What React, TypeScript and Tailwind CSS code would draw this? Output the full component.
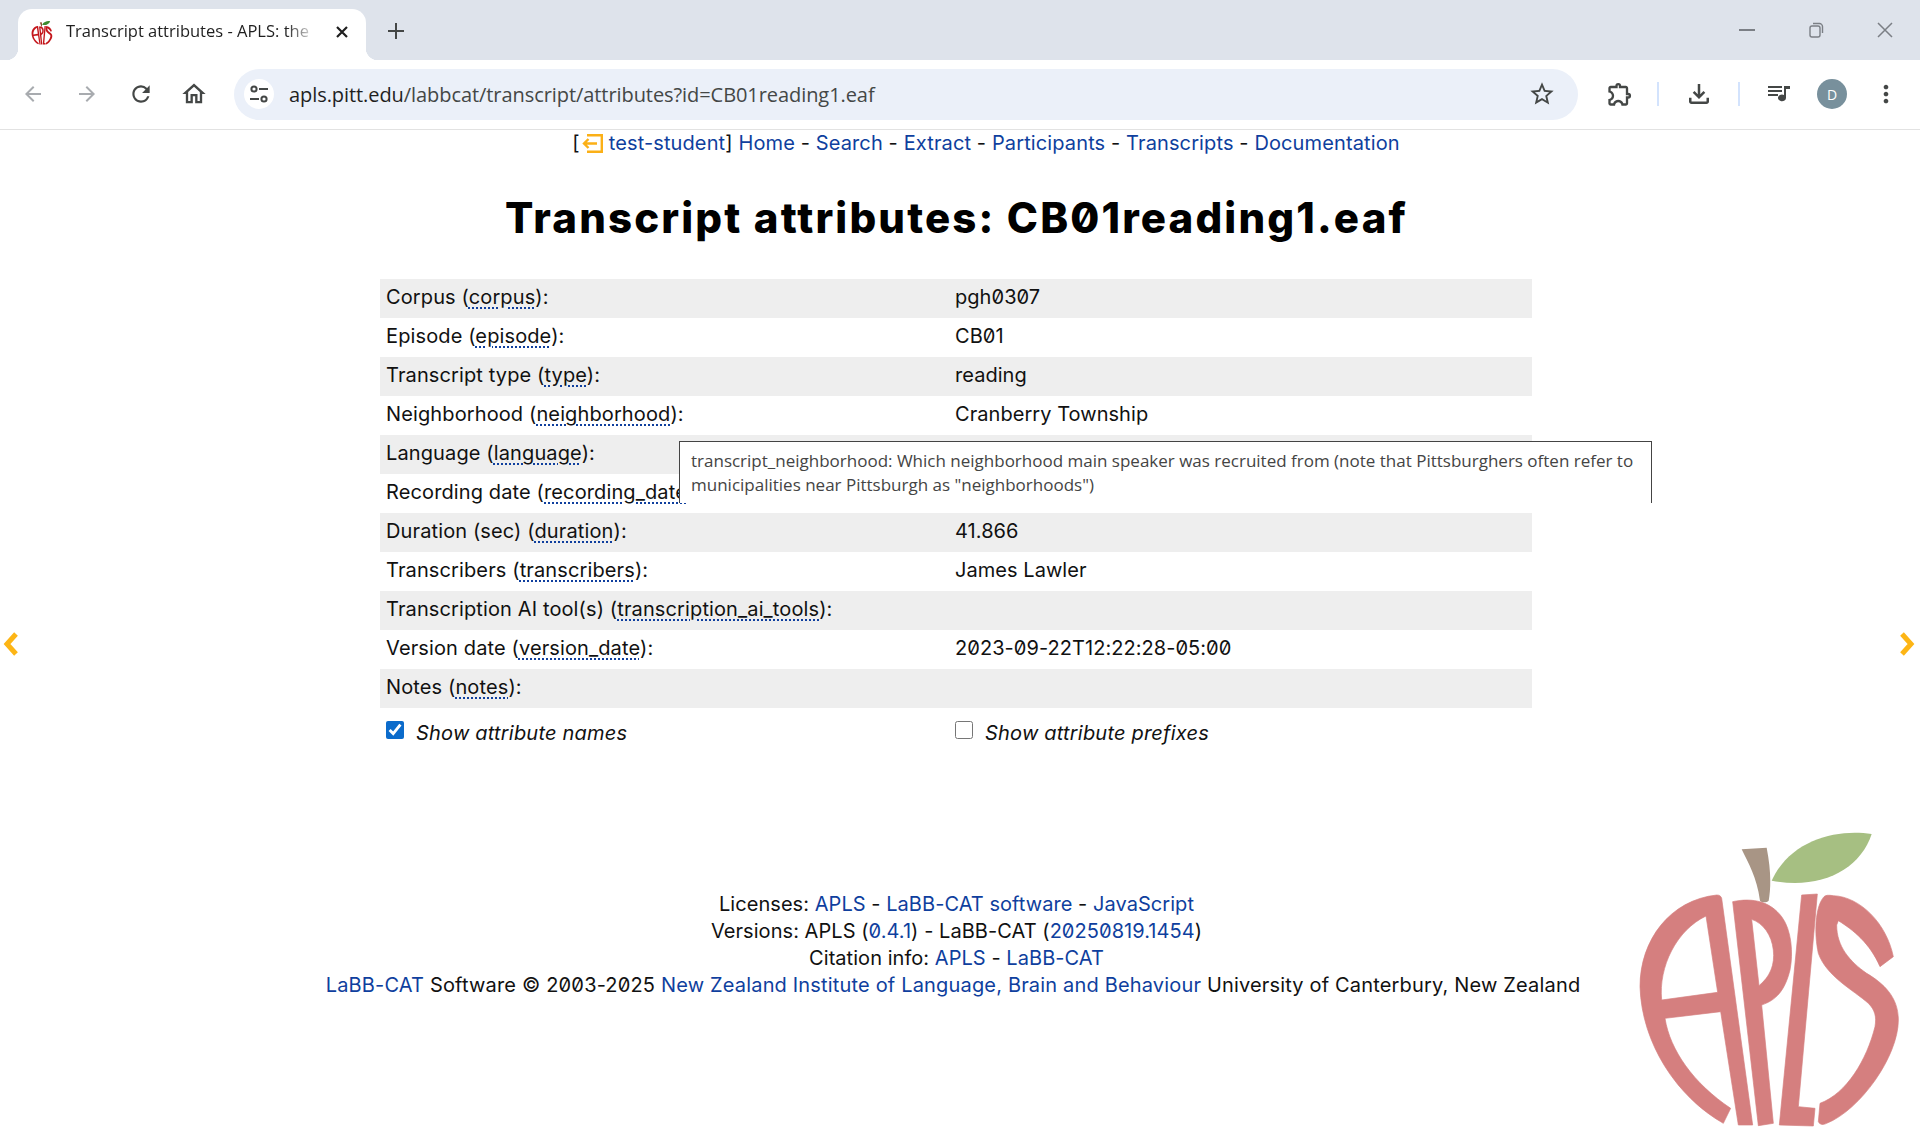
import { MdArrowBack, MdArrowForward, MdOutlineExtension, MdOutlineFileDownload, MdOutlineHome, MdMoreVert, MdRefresh, MdStarBorder } from "react-icons/md";

const rows = [
  ["Corpus", "corpus", "pgh0307"],
  ["Episode", "episode", "CB01"],
  ["Transcript type", "type", "reading"],
  ["Neighborhood", "neighborhood", "Cranberry Township"],
  ["Language", "language", ""],
  ["Recording date", "recording_date", ""],
  ["Duration (sec)", "duration", "41.866"],
  ["Transcribers", "transcribers", "James Lawler"],
  ["Transcription AI tool(s)", "transcription_ai_tools", ""],
  ["Version date", "version_date", "2023-09-22T12:22:28-05:00"],
  ["Notes", "notes", ""],
];

const inter = "font-['Inter','Liberation_Sans',sans-serif] [font-feature-settings:'zero']";

function Apple({ className, fruit, stem, leaf }: { className: string; fruit: string; stem: string; leaf: string }) {
  return (
    <svg viewBox="0 0 900 954" className={className}>
      <path fill={leaf} d="M755 72C650 55 510 90 455 212C600 240 720 180 755 72Z" />
      <path fill={stem} d="M365 118L440 113C455 190 452 240 446 272C440 278 425 278 420 272C410 200 385 160 365 118Z" />
      <g fill={fruit} fillRule="evenodd" stroke={fruit} strokeWidth="2" strokeLinejoin="round">
        <path d="M290 255C150 270 60 390 60 530C65 700 170 860 310 940L332 895C220 820 150 720 135 625L302 605L355 945L398 945L305 265C303 258 298 255 290 255ZM258 318L293 547L125 570C115 470 170 360 258 318Z" />
        <path d="M338 275C400 262 450 275 485 320C515 360 520 430 510 480C495 540 470 570 425 585L460 940L415 947ZM395 328L417 527C450 500 465 465 460 420C455 375 430 340 395 328Z" />
        <path d="M545 255L592 252L535 890L585 895L580 948L478 945Z" />
        <path d="M612 260C585 290 582 370 595 430C620 500 700 540 745 580C765 600 770 620 765 650C740 750 680 850 600 880L595 935C600 945 610 945 620 940C720 900 835 740 835 630C835 560 790 520 740 490C690 455 650 410 650 345L655 332C700 360 750 400 780 470L820 440C800 340 720 260 640 257C625 255 618 255 612 260Z" />
      </g>
    </svg>
  );
}

function ChromeBar() {
  return (
    <div className="font-['Open_Sans','Liberation_Sans',sans-serif]">
      <div className="flex h-[60px] items-end bg-[#dee3eb] pl-[18px]">
        <div className="relative flex h-[51px] w-[348px] items-center rounded-t-[14px] bg-white pb-[6px]">
          <span className="absolute bottom-0 left-[-12px] h-3 w-3 bg-[radial-gradient(circle_at_0_0,#dee3eb_12px,#ffffff_12.5px)]" />
          <span className="absolute bottom-0 right-[-12px] h-3 w-3 bg-[radial-gradient(circle_at_100%_0,#dee3eb_12px,#ffffff_12.5px)]" />
          <Apple className="ml-[12px] h-[26px] w-[24px]" fruit="#c4161c" stem="#8a4a2a" leaf="#3d8b2f" />
          <span className="ml-[12px] w-[250px] overflow-hidden whitespace-nowrap text-[16.5px] text-[#1f1f1f] [mask-image:linear-gradient(90deg,#000_88%,transparent)]">
            Transcript attributes - APLS: the
          </span>
          <svg viewBox="0 0 14 14" className="ml-[19px] h-[14px] w-[14px]" stroke="#1f1f1f" strokeWidth="2.2" fill="none">
            <path d="M2 2L12 12M12 2L2 12" />
          </svg>
        </div>
        <svg viewBox="0 0 16 16" className="mb-[21px] ml-[22px] h-4 w-4" stroke="#444746" strokeWidth="2" fill="none">
          <path d="M8 0V16M0 8H16" />
        </svg>
        <div className="flex-1" />
        <div className="mb-[22px] flex items-center gap-[53px] pr-[27px]">
          <span className="h-[2px] w-4 bg-[#7b7f85]" />
          <svg viewBox="0 0 16 16" className="h-4 w-4" fill="none" stroke="#7b7f85" strokeWidth="1.4">
            <rect x="2" y="4" width="10" height="11" rx="2" />
            <path d="M5 1.5H11.5C13 1.5 14.5 3 14.5 4.5V11" />
          </svg>
          <svg viewBox="0 0 16 16" className="h-4 w-4" fill="none" stroke="#7b7f85" strokeWidth="1.5">
            <path d="M1 1L15 15M15 1L1 15" />
          </svg>
        </div>
      </div>
      <div className="flex h-[70px] items-center border-b border-[#e2e2e2] bg-white pb-[1px] pl-[21px]">
        <MdArrowBack className="h-[24px] w-[24px] shrink-0 text-[#a8abaf]" />
        <MdArrowForward className="ml-[30px] h-[24px] w-[24px] shrink-0 text-[#a8abaf]" />
        <MdRefresh className="ml-[29px] h-[26px] w-[26px] shrink-0 text-[#444746]" />
        <MdOutlineHome className="ml-[26px] h-[28px] w-[28px] shrink-0 text-[#444746]" />
        <div className="ml-[26px] flex h-[51px] w-[1344px] shrink-0 items-center rounded-full bg-[#ebf0f9] pl-[10px] pr-[22px]">
          <span className="flex h-[30px] w-[30px] items-center justify-center rounded-full bg-white">
            <svg viewBox="0 0 20 20" className="h-[20px] w-[20px]" fill="none" stroke="#444746" strokeWidth="2">
              <circle cx="5" cy="5" r="2.6" />
              <path d="M10 5H19M1 15H10" />
              <circle cx="15" cy="15" r="2.6" />
            </svg>
          </span>
          <span className="ml-[15px] flex-1 translate-y-[1px] whitespace-nowrap text-[20px] tracking-[-0.07px] text-[#444746]">
            <span className="text-[#1f1f1f]">apls.pitt.edu</span>/labbcat/transcript/attributes?id=CB01reading1.eaf
          </span>
          <MdStarBorder className="h-[28px] w-[28px] text-[#444746]" />
        </div>
        <MdOutlineExtension className="ml-[28px] h-[28px] w-[28px] shrink-0 text-[#444746]" />
        <span className="ml-[23px] h-[24px] w-[2px] shrink-0 bg-[#d3e3fd]" />
        <MdOutlineFileDownload className="ml-[25px] h-[30px] w-[30px] shrink-0 text-[#444746]" />
        <span className="ml-[24px] h-[24px] w-[2px] shrink-0 bg-[#d3e3fd]" />
        <svg viewBox="0 0 24 24" className="ml-[27px] h-[24px] w-[24px] shrink-0" fill="#444746">
          <path d="M1 4H15V6H1ZM1 8H15V10H1ZM1 12H11V14H1ZM17 4H23V7H19V16A4 3.4 0 1 1 17 13Z" />
        </svg>
        <span className="ml-[26px] flex h-[30px] w-[30px] shrink-0 items-center justify-center rounded-full bg-[#78909c] text-[14px] text-white">
          D
        </span>
        <MdMoreVert className="ml-[25px] h-[28px] w-[28px] shrink-0 text-[#444746]" />
      </div>
    </div>
  );
}

function Sep() {
  return <span> - </span>;
}

function A({ children }: { children: React.ReactNode }) {
  return <a className="text-[#0f3f9e]">{children}</a>;
}

export default function App() {
  return (
    <div className="relative h-[1128px] w-[1920px] overflow-hidden bg-white">
      <ChromeBar />

      <main className={`relative text-[20px] leading-[27px] text-[#111] ${inter}`}>
        <nav className="flex items-center justify-center pl-[52px] tracking-[0.12px]">
          <span className="whitespace-pre">[</span>
          <svg viewBox="0 0 22 19" className="ml-[1px] h-[19px] w-[22px]" fill="none" stroke="#fbb017" strokeWidth="2.4">
            <path d="M6 1.2H20.8V17.8H6" />
            <path d="M16 9.5H3M7.5 5L3 9.5L7.5 14" />
          </svg>
          <span className="ml-[6px] whitespace-pre">
            <A>test-student</A>] <A>Home</A>
            <Sep />
            <A>Search</A>
            <Sep />
            <A>Extract</A>
            <Sep />
            <A>Participants</A>
            <Sep />
            <A>Transcripts</A>
            <Sep />
            <A>Documentation</A>
          </span>
        </nav>

        <h1 className="mt-[37px] pr-[7px] text-center text-[42px] font-extrabold leading-[48px] tracking-[2.15px] text-black">
          Transcript attributes: CB01reading1.eaf
        </h1>

        <div className="ml-[380px] mt-[37px] w-[1152px]">
          <table className="w-full border-collapse">
            <tbody>
              {rows.map(([label, attr, value], i) => (
                <tr key={attr} className={`h-[39px] ${i % 2 === 0 ? "bg-[#eeeeee]" : "bg-white"}`}>
                  <td className="w-[569px] px-[6px] pb-[2px] pt-0 tracking-[0.12px]">
                    {label} (
                    <abbr className="underline decoration-[#0f3f9e] decoration-dotted decoration-2 underline-offset-[3px]">{attr}</abbr>
                    ):
                  </td>
                  <td className="px-[6px] pb-[2px] pt-0 tracking-[0.05px]">{value}</td>
                </tr>
              ))}
            </tbody>
          </table>

          <div className="mt-[12px] flex italic tracking-[0.2px]">
            <label className="flex w-[569px] items-center pl-[6px]">
              <input type="checkbox" defaultChecked className="m-0 h-[18px] w-[18px] -translate-y-[4px] accent-[#0b6bcb]" />
              <span className="ml-[12px]">Show attribute names</span>
            </label>
            <label className="flex items-center pl-[6px]">
              <input type="checkbox" className="m-0 h-[18px] w-[18px] -translate-y-[4px]" />
              <span className="ml-[12px]">Show attribute prefixes</span>
            </label>
          </div>
        </div>

        <footer className="mt-[144px] pr-[7px] text-center">
          <div className="tracking-[0.05px]">
            Licenses: <A>APLS</A>
            <Sep />
            <A>LaBB-CAT software</A>
            <Sep />
            <A>JavaScript</A>
          </div>
          <div className="tracking-[0.05px]">
            Versions: APLS (<A>0.4.1</A>) - LaBB-CAT (<A>20250819.1454</A>)
          </div>
          <div className="tracking-[0.05px]">
            Citation info: <A>APLS</A>
            <Sep />
            <A>LaBB-CAT</A>
          </div>
          <div className="pr-[7px] tracking-[0.17px]">
            <A>LaBB-CAT</A> Software © 2003-2025 <A>New Zealand Institute of Language, Brain and Behaviour</A> University of Canterbury, New Zealand
          </div>
        </footer>

        <div className="absolute left-[679px] top-[311px] h-[62px] w-[973px] border-x border-t border-[#444] bg-white px-[11px] pt-[7px] font-['Open_Sans',sans-serif] text-[17px] leading-[24px] text-[#444] [font-feature-settings:normal]">
          transcript_neighborhood: Which neighborhood main speaker was recruited from (note that Pittsburghers often refer to municipalities near Pittsburgh as "neighborhoods")
        </div>
      </main>

      <svg viewBox="0 0 16 24" className="absolute left-[3px] top-[632px] h-6 w-4" fill="none" stroke="#fdb515" strokeWidth="5">
        <path d="M13 2L4 12L13 22" />
      </svg>
      <svg viewBox="0 0 16 24" className="absolute left-[1899px] top-[632px] h-6 w-4" fill="none" stroke="#fdb515" strokeWidth="5">
        <path d="M3 2L12 12L3 22" />
      </svg>
      <Apple className="absolute left-[1620px] top-[810px] h-[318px] w-[300px]" fruit="#d57f7f" stem="#a89585" leaf="#a6bf82" />
    </div>
  );
}
